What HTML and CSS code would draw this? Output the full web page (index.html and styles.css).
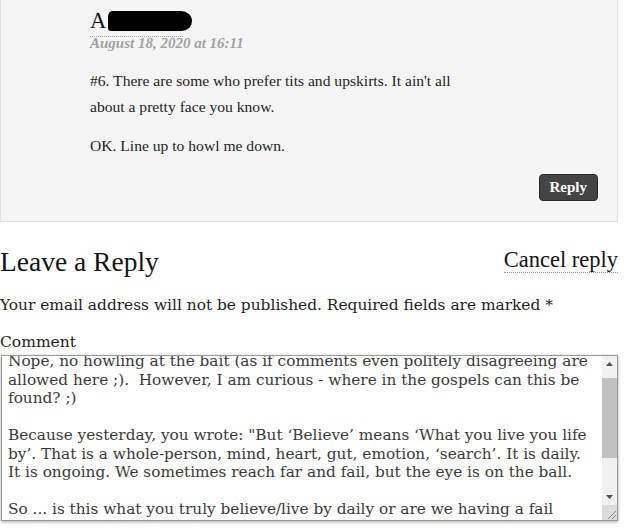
FILE: index.html
```html
<!DOCTYPE html>
<html>
<head>
<meta charset="utf-8">
<link rel="stylesheet" href="styles.css">
</head>
<body>
<div class="page">
  <article class="comment">
    <div class="meta">
      <div class="author"><span class="initial">A</span><span class="redact"></span></div>
      <div class="date">August 18, 2020 at 16:11</div>
    </div>
    <div class="body">
      <p>#6. There are some who prefer tits and upskirts. It ain't all about a pretty face you know.</p>
      <p>OK. Line up to howl me down.</p>
    </div>
    <div class="actions"><a class="reply-btn">Reply</a></div>
  </article>

  <section class="respond">
    <div class="respond-head">
      <h3 class="title">Leave a Reply</h3>
      <a class="cancel">Cancel reply</a>
    </div>
    <p class="notes">Your email address will not be published. Required fields are marked *</p>
    <label class="label" for="comment">Comment</label>
    <div class="field">
      <textarea class="textarea" id="comment">Nope, no howling at the bait (as if comments even politely disagreeing are allowed here ;).  However, I am curious - where in the gospels can this be found? ;)

Because yesterday, you wrote: "But ‘Believe’ means ‘What you live you life by’. That is a whole-person, mind, heart, gut, emotion, ‘search’. It is daily. It is ongoing. We sometimes reach far and fail, but the eye is on the ball.

So ... is this what you truly believe/live by daily or are we having a fail moment here?</textarea>
      <div class="scrollbar" aria-hidden="true">
        <div class="sb-btn"><svg width="7" height="4" viewBox="0 0 7 4"><polygon points="0,4 3.5,0 7,4" fill="#505050"/></svg></div>
        <div class="sb-track"><div class="sb-thumb"></div></div>
        <div class="sb-btn"><svg width="7" height="4" viewBox="0 0 7 4"><polygon points="0,0 7,0 3.5,4" fill="#505050"/></svg></div>
        <div class="sb-corner"><svg width="15" height="15" viewBox="0 0 15 15"><path d="M14 6 L6 14 M14 10 L10 14" stroke="#8c8c8c" stroke-width="1" fill="none"/></svg></div>
      </div>
    </div>
  </section>
</div>
<script src="script.js"></script>
</body>
</html>
```
FILE: styles.css
```css
html, body { margin: 0; padding: 0; background: #fff; }
body {
  font-family: "Liberation Serif", "DejaVu Serif", serif;
  color: #222;
  width: 640px;
  height: 531px;
  overflow: hidden;
}
.page { width: 618px; }

/* comment card */
.comment {
  background: #f5f5f5;
  border: 1px solid #e2e2e2;
  border-top: none;
  padding: 8px 19px 20px 89px;
  box-sizing: border-box;
  width: 618px;
}
.meta { display: flex; flex-direction: column; align-items: flex-start; }
.author {
  width: 93px;
  height: 26px;
  padding-bottom: 2px;
  border-bottom: 1px dotted #a8a8a8;
  font-size: 22.6px;
  line-height: 26px;
  color: #111;
  white-space: nowrap;
}
.initial { color: #151515; }
.redact {
  display: inline-block;
  width: 84px;
  height: 20px;
  margin-left: 2px;
  vertical-align: -3px;
  background: #000;
  border-radius: 4px 11px 10px 3px / 6px 10px 10px 3px;
}
.date {
  font-size: 15px;
  font-style: italic;
  font-weight: bold;
  color: #a2a2a2;
  line-height: 12px;
}
.body { margin-top: 19px; max-width: 390px; }
.body p {
  margin: 0 0 13px;
  font-size: 15.6px;
  line-height: 26px;
  color: #1e1e1e;
}
.body p:last-child { margin-bottom: 0; }
.actions { display: flex; justify-content: flex-end; margin-top: 15px; }
.reply-btn {
  background: #444;
  color: #fff;
  font-weight: bold;
  font-size: 15px;
  line-height: 17px;
  padding: 4px 10px;
  border-radius: 4px;
  border: 1px solid #2a2a2a;
}

/* reply form */
.respond { margin-top: 24px; }
.respond-head {
  display: flex;
  justify-content: space-between;
  align-items: flex-start;
}
.title {
  margin: 0;
  font-weight: normal;
  font-size: 27.5px;
  line-height: 32px;
  color: #151515;
}
.cancel {
  margin-top: 2px;
  font-size: 22.5px;
  line-height: 24px;
  color: #151515;
  border-bottom: 1px dotted #9a9a9a;
}
.notes {
  margin: 15px 0 0;
  font-family: "DejaVu Serif", serif;
  font-size: 15.4px;
  line-height: 24px;
  color: #1e1e1e;
}
.label {
  display: block;
  margin-top: 15px;
  font-family: "DejaVu Serif", serif;
  font-size: 15.5px;
  line-height: 20px;
  color: #1e1e1e;
}
.field {
  position: relative;
  margin: 3px 0 0 1px;
  width: 617px;
  height: 166px;
}
.textarea {
  display: block;
  margin: 0;
  width: 617px;
  height: 166px;
  box-sizing: border-box;
  font-family: "DejaVu Serif", serif;
  font-size: 15.3px;
  line-height: 18.5px;
  color: #3a3a3a;
  background: #fff;
  border: 1px solid #9a9a9a;
  padding: 8px 24px 47px 6px;
  box-shadow: 0 1px 3px rgba(0,0,0,0.35);
  resize: none;
  overflow-y: scroll;
  outline: none;
}
.scrollbar {
  position: absolute;
  top: 1px;
  right: 1px;
  bottom: 1px;
  width: 15px;
  display: flex;
  flex-direction: column;
  background: #f1f1f1;
}
.sb-btn {
  height: 16px;
  display: flex;
  align-items: center;
  justify-content: center;
  flex: none;
}
.sb-btn svg { display: block; }
.sb-track { flex: 1; padding-top: 6px; }
.sb-thumb { height: 80px; background: #c1c1c1; }
.sb-corner {
  height: 15px;
  flex: none;
  background: #dcdcdc;
}
.sb-corner svg { display: block; }
```
FILE: script.js
```js
document.getElementById('comment').scrollTop = 12;
```
